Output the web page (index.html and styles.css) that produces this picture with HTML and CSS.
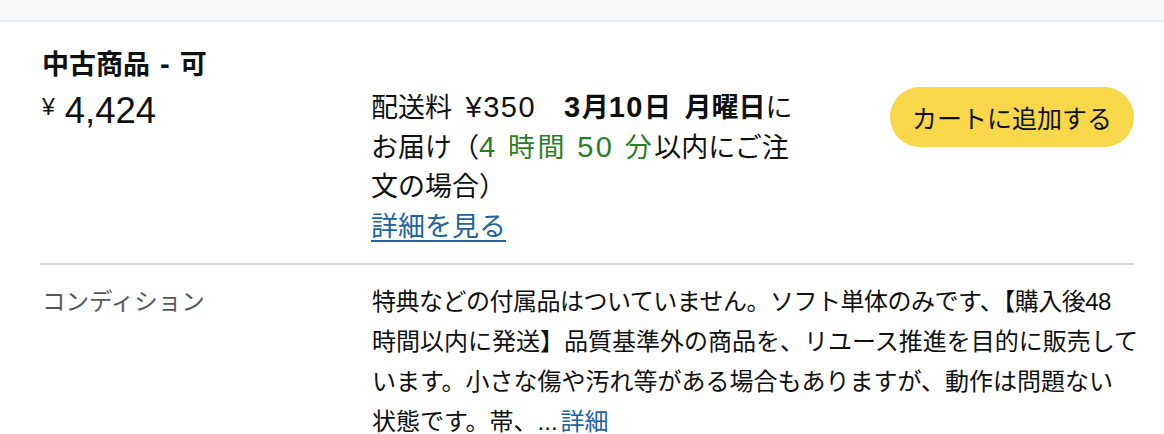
FILE: index.html
```html
<!DOCTYPE html>
<html lang="ja">
<head>
<meta charset="utf-8">
<link rel="stylesheet" href="styles.css">
</head>
<body>
<div class="topbar"></div>
<div class="offer">
  <div class="title">中古商品<span class="lat"> - </span>可</div>
  <div class="main-row">
    <div class="price-col">
      <div class="price"><span class="yen">¥</span><span class="amount">4,424</span></div>
    </div>
    <div class="delivery">
      <div class="line line-first">配送料 <span class="lat">¥350</span><span class="gap"></span><b><span class="lat">3</span>月<span class="lat">10</span>日 月曜日</b>に</div>
      <div class="line">お届け（<span class="green"><span class="lat">4 </span>時間<span class="lat"> 50 </span>分</span>以内にご注</div>
      <div class="line">文の場合）</div>
      <div class="line"><a class="link" href="#">詳細を見る</a></div>
    </div>
    <div class="btn-col">
      <button class="cart-btn" type="button">カートに追加する</button>
    </div>
  </div>
  <div class="cond-row">
    <div class="cond-label">コンディション</div>
    <div class="cond-text"><span class="tight">特典などの付属品はついていません。ソフト単体のみです、【購入後48</span><br>時間以内に発送】品質基準外の商品を、リユース推進を目的に販売して<br>います。小さな傷や汚れ等がある場合もありますが、動作は問題ない<br>状態です。帯、...<a class="more" href="#">詳細</a></div>
  </div>
</div>
</body>
</html>
```

FILE: styles.css
```css
html, body {
  margin: 0;
  padding: 0;
  background: #ffffff;
}
body {
  font-family: "Liberation Sans", "Noto Sans CJK JP", sans-serif;
  color: #0f1111;
}
.topbar {
  height: 20px;
  background: #f7f8f8;
  border-bottom: 2px solid #e6e9ec;
}
.offer {
  padding: 0 30px 0 40px;
}
.title {
  padding: 25px 0 0 2px;
  font-size: 27px;
  line-height: 34px;
  font-weight: bold;
  word-spacing: 2px;
}
.lat {
  font-size: 29px;
}
.main-row {
  display: flex;
  align-items: flex-start;
  margin-top: 5px;
  padding-bottom: 16px;
  border-bottom: 2px solid #d5d9d9;
}
.price-col {
  width: 330px;
  flex: none;
}
.price {
  padding-left: 2px;
  line-height: 40px;
  margin-top: 4px;
}
.yen {
  font-size: 23px;
  vertical-align: top;
  position: relative;
  top: -4px;
  margin-right: 10px;
}
.amount {
  font-size: 36.5px;
}
.delivery {
  width: 460px;
  flex: none;
  font-size: 27px;
  padding-left: 1px;
}
.delivery .lat {
  letter-spacing: 1.5px;
}
.line {
  height: 40px;
  line-height: 40px;
  white-space: nowrap;
}
.line-first {
  word-spacing: 6px;
}
.gap {
  display: inline-block;
  width: 28px;
}
.delivery b {
  font-weight: bold;
}
.green {
  color: #2b7d1f;
}
.delivery .green,
.delivery .green .lat {
  letter-spacing: 2.4px;
}
.link {
  color: #2162a1;
  text-decoration: underline;
  text-underline-offset: 4px;
}
.btn-col {
  margin-left: auto;
}
.cart-btn {
  display: block;
  width: 244px;
  height: 60px;
  border: none;
  border-radius: 30px;
  background: #f8d84a;
  color: #0f1111;
  font-family: "Liberation Sans", "Noto Sans CJK JP", sans-serif;
  font-size: 25px;
  padding: 0;
}
.cond-row {
  display: flex;
  padding-top: 17px;
}
.cond-label {
  width: 328px;
  flex: none;
  font-size: 23.5px;
  line-height: 40px;
  color: #565959;
  padding-left: 2px;
}
.cond-text {
  width: 790px;
  flex: none;
  font-size: 24px;
  line-height: 40px;
  padding-left: 2px;
  white-space: nowrap;
}
.tight {
  letter-spacing: -0.5px;
}
.more {
  color: #2162a1;
  text-decoration: none;
  margin-left: 3px;
}
```
